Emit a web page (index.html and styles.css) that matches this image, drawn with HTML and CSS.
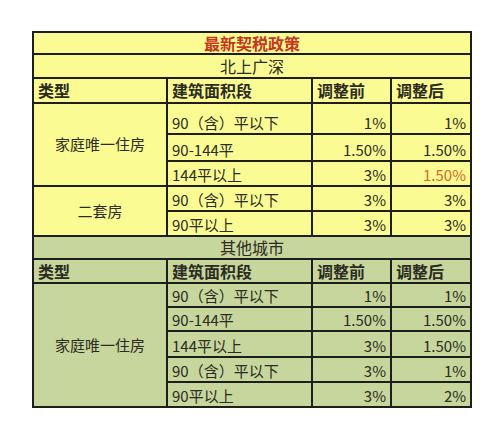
FILE: index.html
```html
<!DOCTYPE html>
<html lang="zh-CN">
<head>
    <meta charset="UTF-8">
    <meta name="viewport" content="width=device-width, initial-scale=1.0">
    <title>最新契税政策</title>
    <link rel="stylesheet" href="styles.css">
</head>
<body>
    <div class="sheet">
        <table class="tax-table">
            <colgroup>
                <col class="col-type">
                <col class="col-area">
                <col class="col-before">
                <col class="col-after">
            </colgroup>
            <tbody class="tier-one">
                <tr class="h-title">
                    <td colspan="4" class="title">最新契税政策</td>
                </tr>
                <tr class="h-24">
                    <td colspan="4" class="region">北上广深</td>
                </tr>
                <tr class="h-25">
                    <th>类型</th>
                    <th>建筑面积段</th>
                    <th>调整前</th>
                    <th>调整后</th>
                </tr>
                <tr class="h-31">
                    <td rowspan="3" class="kind">家庭唯一住房</td>
                    <td>90（含）平以下</td>
                    <td class="num">1%</td>
                    <td class="num">1%</td>
                </tr>
                <tr class="h-27">
                    <td>90-144平</td>
                    <td class="num">1.50%</td>
                    <td class="num">1.50%</td>
                </tr>
                <tr class="h-25">
                    <td>144平以上</td>
                    <td class="num">3%</td>
                    <td class="num changed">1.50%</td>
                </tr>
                <tr class="h-25">
                    <td rowspan="2" class="kind">二套房</td>
                    <td>90（含）平以下</td>
                    <td class="num">3%</td>
                    <td class="num">3%</td>
                </tr>
                <tr class="h-25">
                    <td>90平以上</td>
                    <td class="num">3%</td>
                    <td class="num">3%</td>
                </tr>
            </tbody>
            <tbody class="other-cities">
                <tr class="h-23">
                    <td colspan="4" class="region">其他城市</td>
                </tr>
                <tr class="h-24">
                    <th>类型</th>
                    <th>建筑面积段</th>
                    <th>调整前</th>
                    <th>调整后</th>
                </tr>
                <tr class="h-24">
                    <td rowspan="5" class="kind">家庭唯一住房</td>
                    <td>90（含）平以下</td>
                    <td class="num">1%</td>
                    <td class="num">1%</td>
                </tr>
                <tr class="h-24">
                    <td>90-144平</td>
                    <td class="num">1.50%</td>
                    <td class="num">1.50%</td>
                </tr>
                <tr class="h-26">
                    <td>144平以上</td>
                    <td class="num">3%</td>
                    <td class="num">1.50%</td>
                </tr>
                <tr class="h-25">
                    <td>90（含）平以下</td>
                    <td class="num">3%</td>
                    <td class="num">1%</td>
                </tr>
                <tr class="h-25">
                    <td>90平以上</td>
                    <td class="num">3%</td>
                    <td class="num">2%</td>
                </tr>
            </tbody>
        </table>
    </div>
</body>
</html>
```

FILE: styles.css
```css
* {
    margin: 0;
    padding: 0;
    box-sizing: border-box;
}

body {
    background: #fff;
    font-family: "Noto Sans CJK SC", "Noto Sans", sans-serif;
    color: #2b2b22;
}

.sheet {
    padding: 31px 0 0 32px;
}

.tax-table {
    border-collapse: collapse;
    table-layout: fixed;
    width: 438px;
    border: 2px solid #1e1e1a;
}

.col-type { width: 134px; }
.col-area { width: 145px; }
.col-before { width: 79px; }
.col-after { width: 80px; }

.tax-table td,
.tax-table th {
    border: 2px solid #1e1e1a;
    padding: 0 4px 1px;
    font-size: 15px;
    line-height: 18px;
    font-weight: 400;
    text-align: left;
    vertical-align: bottom;
    white-space: nowrap;
}

.tax-table th {
    font-size: 16px;
    font-weight: 700;
    vertical-align: middle;
}

.tier-one td,
.tier-one th {
    background: #fbfb93;
}

.other-cities td,
.other-cities th {
    background: #c7d69c;
}

.tax-table .title {
    text-align: center;
    vertical-align: middle;
    font-size: 16px;
    font-weight: 700;
    color: #c8361e;
}

.tax-table .region {
    text-align: center;
    vertical-align: middle;
    font-size: 16px;
}

.tax-table .kind {
    text-align: center;
    vertical-align: middle;
}

.tax-table .num {
    text-align: right;
}

.tax-table .changed {
    color: #d4692b;
}

.h-title { height: 22px; }
.h-23 { height: 23px; }
.h-24 { height: 24px; }
.h-25 { height: 25px; }
.h-26 { height: 26px; }
.h-27 { height: 27px; }
.h-31 { height: 31px; }
```
